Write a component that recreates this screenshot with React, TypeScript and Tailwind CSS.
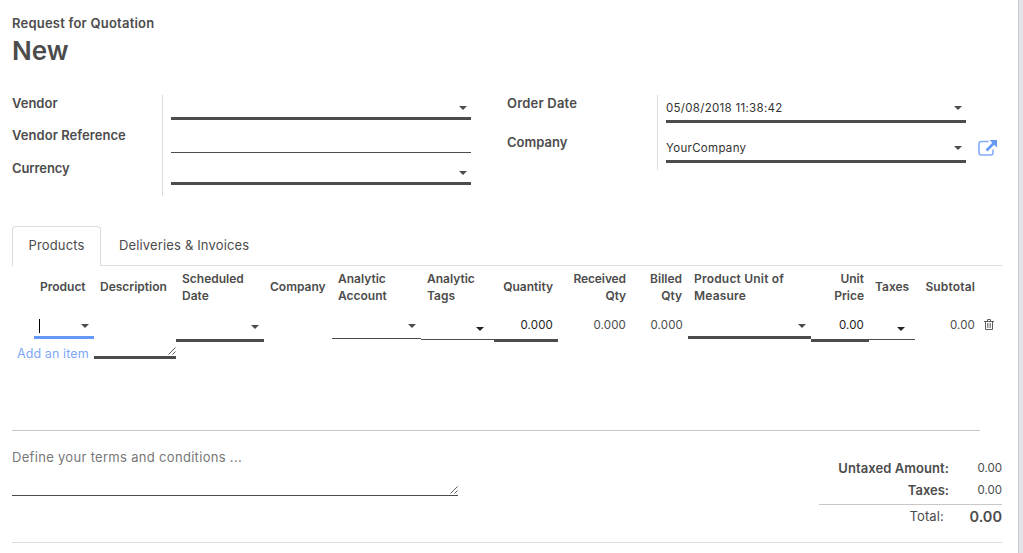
import type { ReactNode } from "react";

function Caret({ className = "" }: { className?: string }) {
  return (
    <svg width="8" height="4" viewBox="0 0 8 4" className={`shrink-0 fill-current ${className}`}>
      <path d="M0 0h8L4 4z" />
    </svg>
  );
}

function Grip() {
  return (
    <svg width="8" height="8" viewBox="0 0 8 8" className="shrink-0 stroke-[#4c4c4c]" strokeWidth="0.9">
      <path d="M0.5 7.5l7-7M4.5 7.5l3-3" />
    </svg>
  );
}

function Label({ children, className }: { children: ReactNode; className: string }) {
  return <label className={`block text-[13px] font-semibold leading-5 whitespace-nowrap ${className}`}>{children}</label>;
}

function Select({ children, className }: { children?: ReactNode; className: string }) {
  return (
    <div className={`flex w-[300px] items-start justify-between border-b-[3px] border-[#4c4c4c] pr-1 ${className}`}>
      <span className="text-[11.5px] leading-4 tracking-[0.3px] text-[#333]">{children}</span>
      <Caret className="mt-1.5" />
    </div>
  );
}

type HeadCell = { lines: string[]; right?: boolean; className?: string };

const head: HeadCell[] = [
  { lines: [] },
  { lines: ["Product"] },
  { lines: ["Description"] },
  { lines: ["Scheduled", "Date"] },
  { lines: ["Company"] },
  { lines: ["Analytic", "Account"] },
  { lines: ["Analytic", "Tags"] },
  { lines: ["Quantity"], right: true, className: "-mr-px" },
  { lines: ["Received", "Qty"], right: true, className: "tracking-[-0.1px]" },
  { lines: ["Billed", "Qty"], right: true },
  { lines: ["Product Unit of", "Measure"], className: "tracking-[0.2px]" },
  { lines: ["Unit", "Price"], right: true, className: "-mr-px" },
  { lines: ["Taxes"] },
  { lines: ["Subtotal"], right: true, className: "tracking-[0.15px]" },
  { lines: [] },
];

const columns = "grid grid-cols-[22px_60px_82px_88px_68px_89px_73px_64px_74px_56px_123px_58px_46px_66px_21px]";
const figure = "text-right text-[11.5px] leading-[17px] tracking-[0.15px]";

function OrderLines() {
  return (
    <section className="h-[164px]">
      <div className={`${columns} h-[43px] items-center pb-[2px]`}>
        {head.map((cell, i) => (
          <div
            key={i}
            className={`px-1.5 text-[12px] font-semibold leading-[17px] whitespace-nowrap ${cell.right ? "text-right" : ""} ${cell.className ?? ""}`}
          >
            {cell.lines.map((line) => (
              <div key={line}>{line}</div>
            ))}
          </div>
        ))}
      </div>
      <div className={`${columns} h-[50px] items-start`}>
        <div />
        <div>
          <div className="flex h-[30px] items-start justify-between border-b-[3px] border-[#6699f5] pr-[5px] pl-[5px]">
            <span className="mt-[10px] h-[14px] w-px bg-black" />
            <Caret className="mt-[15px]" />
          </div>
        </div>
        <div className="flex h-[50px] items-end justify-end border-b-[3px] border-[#4c4c4c] pb-px">
          <Grip />
        </div>
        <div className="flex h-[33px] items-start justify-end border-b-[3px] border-[#4c4c4c] pt-4 pr-[5px]">
          <Caret />
        </div>
        <div />
        <div className="flex h-[30px] items-start justify-end border-b border-[#4c4c4c] pt-[15px] pr-[5px]">
          <Caret />
        </div>
        <div className="flex h-[31px] items-start justify-end border-b border-[#4c4c4c] pt-[18px] pr-[10px] text-[#222]">
          <Caret />
        </div>
        <div className={`h-[33px] border-b-[3px] border-[#4c4c4c] pt-2 pr-[5px] text-[#222] ${figure}`}>0.000</div>
        <div className={`pt-2 pr-1.5 ${figure}`}>0.000</div>
        <div className={`pt-2 pr-[5px] ${figure}`}>0.000</div>
        <div className="flex h-[30px] items-start justify-end border-b-[3px] border-[#4c4c4c] pt-[15px] pr-[5px]">
          <Caret />
        </div>
        <div className={`h-[33px] border-b-[3px] border-[#4c4c4c] pt-2 pr-[5px] text-[#222] ${figure}`}>0.00</div>
        <div className="flex h-[31px] items-start justify-end border-b border-[#4c4c4c] pt-[18px] pr-[10px] text-[#222]">
          <Caret />
        </div>
        <div className={`pt-2 pr-1.5 ${figure}`}>0.00</div>
        <svg width="10" height="11" viewBox="0 0 10 11" fill="none" className="mt-[10px] ml-[3px] stroke-[#5c5c60]">
          <path d="M0 2.500h10M3.500 2V0.500h3V2M1.500 3v7.500h7V3" />
          <path d="M3.500 4v5M5 4v5M6.500 4v5" strokeWidth="0.700" />
        </svg>
      </div>
      <a className="-mt-[13px] ml-[5px] block w-fit text-[12.5px] leading-4 tracking-[0.1px] whitespace-nowrap text-[#7da7f7]">
        Add an item
      </a>
    </section>
  );
}

export default function App() {
  return (
    <div className="flex h-[553px] w-[1023px] overflow-hidden bg-white font-['Inter',sans-serif] text-[#4c4c4c]">
      <main className="h-full w-[1018px] shrink-0 pl-3">
        <header className="h-[95px] pt-[13px]">
          <p className="w-fit text-[13px] font-semibold leading-5 tracking-[0.22px]">Request for Quotation</p>
          <h1 className="w-fit text-[26px] font-semibold leading-9">New</h1>
        </header>

        <section className="flex h-[131px] items-start">
          <div className="w-[150px]">
            <Label className="-mt-[2px]">Vendor</Label>
            <Label className="mt-3 tracking-[0.05px]">Vendor Reference</Label>
            <Label className="mt-[13px] tracking-[-0.1px]">Currency</Label>
          </div>
          <div className="h-[101px] w-[345px] border-l border-[#dcdcdc] pl-2">
            <Select className="mt-[5px] h-5" />
            <div className="h-[33px] w-[300px] border-b border-[#4c4c4c]" />
            <Select className="mt-3 h-5" />
          </div>
          <div className="w-[150px]">
            <Label className="-mt-[2px] tracking-[0.2px]">Order Date</Label>
            <Label className="mt-[19px]">Company</Label>
          </div>
          <div className="h-[75px] border-l border-[#dcdcdc] pl-2">
            <Select className="mt-[5px] h-[23px]">05/08/2018 11:38:42</Select>
            <div className="flex items-start">
              <Select className="mt-[17px] h-[23px]">YourCompany</Select>
              <svg width="20" height="18" viewBox="0 0 20 18" fill="none" className="mt-4 ml-3">
                <path
                  d="M10.500 2.500H3.200A2.200 2.200 0 0 0 1 4.700v9.100A2.200 2.200 0 0 0 3.200 16h9.600a2.200 2.200 0 0 0 2.200-2.200V10.500"
                  stroke="#83acf8"
                  strokeWidth="1.600"
                />
                <path d="M8.500 11.500l7-7" stroke="#6699f5" strokeWidth="2.600" />
                <path d="M11.500 1H19v7.500z" fill="#6699f5" />
              </svg>
            </div>
          </div>
        </section>

        <nav className="flex h-10 w-[990px] items-stretch text-[13px]">
          <div className="w-[89px] rounded-t border border-b-0 border-[#dcdcdc] pt-2 text-center leading-5 tracking-[0.15px]">
            Products
          </div>
          <div className="flex-1 border-b border-[#dcdcdc] pt-[9px] pl-[18px] leading-5">
            <span className="tracking-[0.15px]">Deliveries &amp; Invoices</span>
          </div>
        </nav>

        <OrderLines />

        <footer className="flex h-[113px] w-[990px] flex-col border-b border-[#dcdcdc]">
          <hr className="h-px w-[968px] shrink-0 border-0 bg-[#c8c8c8]" />
          <div className="flex justify-between">
            <div className="flex h-[65px] w-[446px] items-end justify-between border-b border-[#4c4c4c] pb-px">
              <span className="self-start pt-4 text-[13px] leading-5 tracking-[0.31px] text-[#777]">
                Define your terms and conditions ...
              </span>
              <Grip />
            </div>
            <div className="w-[183px] pt-[26px]">
              <div className="flex justify-end text-[13px] leading-[22px] whitespace-nowrap">
                <b className="w-[130px] text-right font-semibold tracking-[0.08px]">Untaxed Amount:</b>
                <span className="w-[53px] text-right text-[11.5px]">0.00</span>
              </div>
              <div className="flex justify-end text-[13px] leading-[22px]">
                <b className="w-[130px] text-right font-semibold">Taxes:</b>
                <span className="w-[53px] text-right text-[11.5px]">0.00</span>
              </div>
              <div className="mt-[3px] flex justify-end border-t border-[#c8c8c8] leading-[23px]">
                <span className="w-[125px] text-right text-[13px] tracking-[0.15px]">Total:</span>
                <b className="w-[58px] text-right text-[14.5px] font-semibold">0.00</b>
              </div>
            </div>
          </div>
        </footer>
      </main>
      <aside className="h-full flex-1 border-l border-[#c9c9d6] bg-[#e3e3ea]" />
    </div>
  );
}
